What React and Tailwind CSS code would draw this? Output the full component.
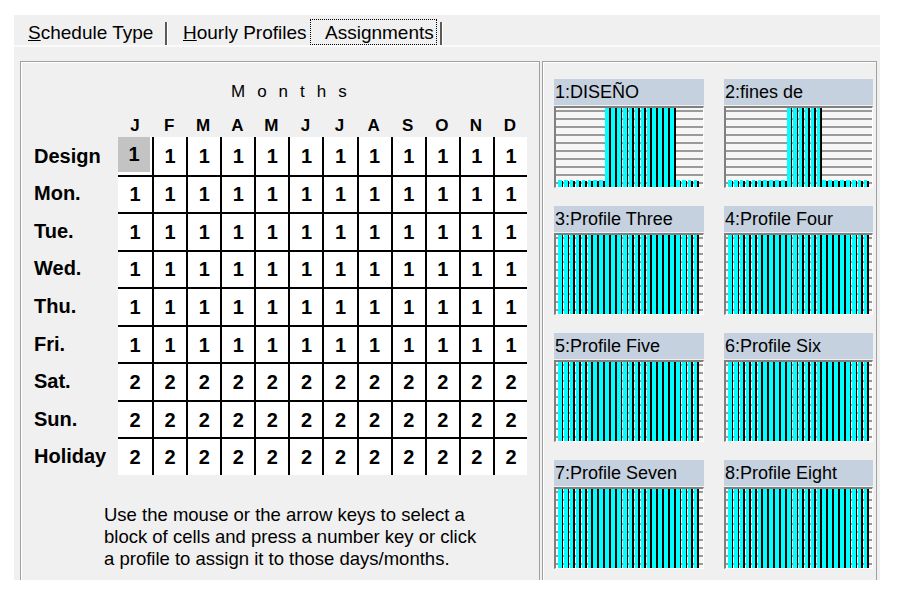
import React from 'react';

const MONTHS = ['J', 'F', 'M', 'A', 'M', 'J', 'J', 'A', 'S', 'O', 'N', 'D'];

const DAYS = [
  ['Design', 1],
  ['Mon.', 1],
  ['Tue.', 1],
  ['Wed.', 1],
  ['Thu.', 1],
  ['Fri.', 1],
  ['Sat.', 2],
  ['Sun.', 2],
  ['Holiday', 2],
];

const PROFILES = [
  { name: '1:DISEÑO', on: (h) => h >= 8 && h <= 19 },
  { name: '2:fines de', on: (h) => h >= 10 && h <= 15 },
  { name: '3:Profile Three', on: () => true },
  { name: '4:Profile Four', on: () => true },
  { name: '5:Profile Five', on: () => true },
  { name: '6:Profile Six', on: () => true },
  { name: '7:Profile Seven', on: () => true },
  { name: '8:Profile Eight', on: () => true },
];

function Chart({ on }) {
  const slot = 5.9;
  const height = 79;
  return (
    <svg width="100%" height={height} shapeRendering="crispEdges" className="block">
      {/* grid lines behind the bars */}
      {Array.from({ length: 10 }).map((_, k) => (
        <rect key={k} x="0" y={2 + k * 8} width="100%" height="2" fill="#9a9a9a" />
      ))}
      {Array.from({ length: 24 }).map((_, i) => {
        const x = 2 + i * slot;
        const h = on(i) ? height : 7;
        const y = height - h;
        return (
          <g key={i}>
            <rect x={x} y={y} width={3.6} height={h} fill="#00ffff" />
            <rect x={x + 3.6} y={y + (on(i) ? 0 : 1)} width={1.8} height={on(i) ? h : h - 1} fill="#000" />
          </g>
        );
      })}
    </svg>
  );
}

function Profile({ name, on }) {
  return (
    <div className="flex flex-col">
      <div className="h-[26px] bg-[#c5d1de] flex items-center pl-[1px] text-[18px] text-black whitespace-nowrap overflow-hidden">
        {name}
      </div>
      <div className="mt-[1px] h-[82px] border-t-2 border-l-2 border-[#808080] border-r border-b border-r-white border-b-white bg-[#f6f6f6] overflow-hidden">
        <Chart on={on} />
      </div>
    </div>
  );
}

function Separator() {
  return <div className="w-[3px] h-[23px] bg-[#5a5a5a] border-r border-white" />;
}

export default function App() {
  return (
    <div
      className="w-[905px] h-[602px] bg-white overflow-hidden text-black"
      style={{ fontFamily: '"Liberation Sans", Arial, sans-serif' }}
    >
      <div className="ml-[14px] mt-[15px] w-[866px]">
        {/* Tab strip */}
        <div className="h-[30px] bg-[#f0f0f0] flex items-end text-[19px] leading-[22px]">
          <div className="pl-[14px] w-[151px] h-[23px] whitespace-nowrap">
            <u>S</u>chedule Type
          </div>
          <Separator />
          <div className="ml-[15px] w-[125px] h-[23px] whitespace-nowrap">
            <u>H</u>ourly Profiles
          </div>
          <div className="ml-[2px] h-[26px] w-[127px] border border-dotted border-black pl-[14px] pt-[2px] whitespace-nowrap">
            Assignments
          </div>
          <div className="ml-[3px]">
            <Separator />
          </div>
        </div>
        <div className="h-[2px] bg-[#fbfbfb]" />

        {/* Tab page */}
        <div className="h-[533px] bg-[#f0f0f0] flex gap-[2px] pl-[6px] pt-[14px] overflow-hidden">
          {/* Assignments grid */}
          <div className="w-[520px] h-[540px] shrink-0 border border-[#a0a0a0] shadow-[inset_1px_1px_0_#ffffff]">
            <div className="mt-[20px] ml-[210px] h-[20px] leading-[20px] text-[17px] tracking-[12px]">Months</div>

            <div className="mt-[12px] ml-[13px] w-[493px] h-[23px] grid grid-cols-[84px_repeat(12,minmax(0,1fr))] text-[17px] font-bold leading-[23px]">
              <div />
              {MONTHS.map((m, i) => (
                <div key={i} className="text-center">{m}</div>
              ))}
            </div>

            <div className="ml-[13px] w-[493px] h-[338px] grid grid-cols-[84px_repeat(12,minmax(0,1fr))] grid-rows-[repeat(9,minmax(0,1fr))]">
              {DAYS.map(([label, value], r) => (
                <React.Fragment key={label}>
                  <div className="flex items-center text-[20px] font-bold">{label}</div>
                  {MONTHS.map((_, c) => {
                    const selected = r === 0 && c === 0;
                    return (
                      <div
                        key={c}
                        className={`bg-white flex text-[20px] font-bold ${c > 0 ? 'border-l-2 border-l-black' : ''} ${r > 0 ? 'border-t-2 border-t-black' : ''} ${selected ? 'pr-[2px] pb-[3px]' : ''}`}
                      >
                        <div className={`flex-1 flex items-center justify-center ${selected ? 'bg-[#c3c3c3]' : ''}`}>
                          {value}
                        </div>
                      </div>
                    );
                  })}
                </React.Fragment>
              ))}
            </div>

            <div className="mt-[29px] ml-[83px] text-[18.5px] leading-[22px] whitespace-nowrap">
              <div>Use the mouse or the arrow keys to select a</div>
              <div>block of cells and press a number key or click</div>
              <div>a profile to assign it to those days/months.</div>
            </div>
          </div>

          {/* Profiles */}
          <div className="w-[335px] h-[540px] shrink-0 border border-[#a0a0a0] shadow-[inset_1px_1px_0_#ffffff]">
            <div className="grid grid-cols-[150px_149px] gap-x-[20px] gap-y-[18px] pl-[11px] pt-[17px]">
              {PROFILES.map((p) => (
                <Profile key={p.name} name={p.name} on={p.on} />
              ))}
            </div>
          </div>
        </div>
      </div>
    </div>
  );
}
